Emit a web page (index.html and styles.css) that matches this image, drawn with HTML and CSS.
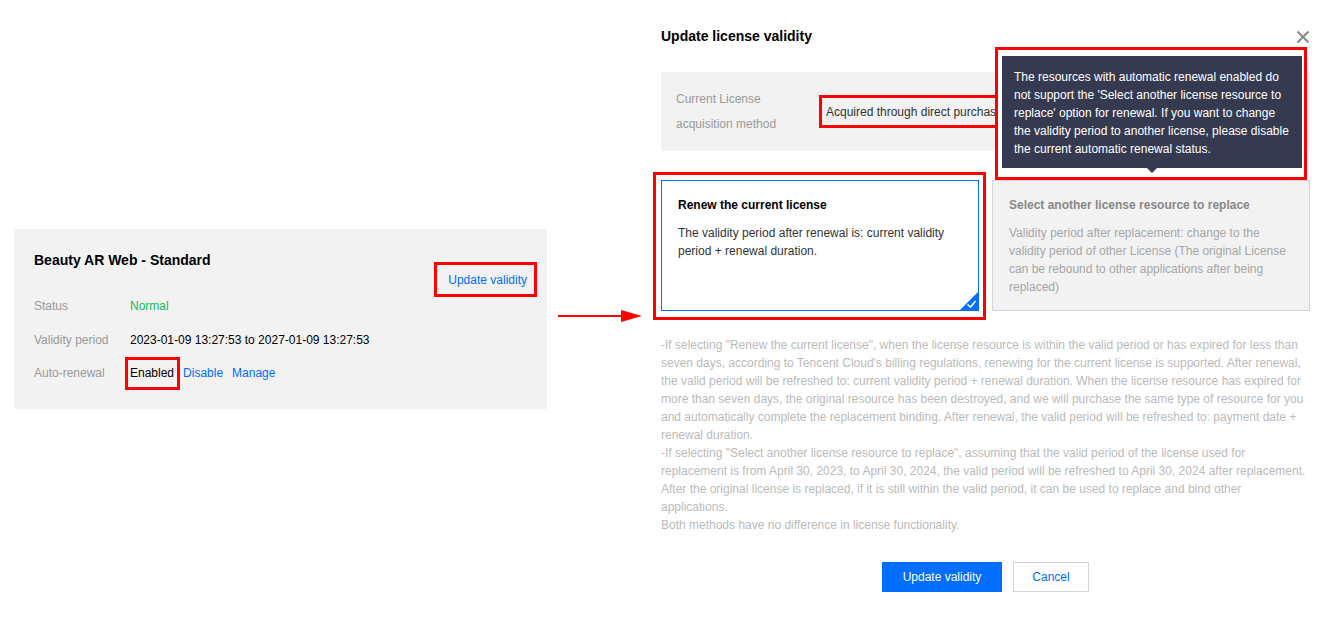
FILE: index.html
```html
<!doctype html>
<html>
<head>
<meta charset="utf-8">
<title>Update license validity</title>
<link rel="stylesheet" href="styles.css">
</head>
<body>
<div class="scene">
	<div class="product">
		<div class="product-head">
			<h3 class="product-name">Beauty AR Web - Standard</h3>
			<a href="#" class="link mark mark-link">Update validity</a>
		</div>
		<ul class="info">
			<li><span class="info-label">Status</span><span class="ok">Normal</span></li>
			<li><span class="info-label">Validity period</span><span>2023-01-09 13:27:53 to 2027-01-09 13:27:53</span></li>
			<li><span class="info-label">Auto-renewal</span><span class="mark mark-tag">Enabled</span><a href="#" class="link">Disable</a><a href="#" class="link">Manage</a></li>
		</ul>
	</div>

	<svg class="arrow" width="84" height="14" viewBox="0 0 84 14">
		<line x1="0" y1="7" x2="66" y2="7" stroke="#f00" stroke-width="2"/>
		<polygon points="63,1 84,7 63,13" fill="#f00"/>
	</svg>

	<div class="dialog">
		<div class="dialog-head">
			<h2 class="dialog-title">Update license validity</h2>
			<svg class="close" width="14" height="14" viewBox="0 0 14 14">
				<path d="M1.5 1.5 L12.5 12.5 M12.5 1.5 L1.5 12.5" stroke="#888" stroke-width="2"/>
			</svg>
		</div>

		<div class="method">
			<span class="method-label">Current License acquisition method</span>
			<span class="mark mark-method">Acquired through direct purchase</span>
		</div>

		<div class="options">
			<div class="option option-on">
				<h4 class="option-title">Renew the current license</h4>
				<p class="option-text">The validity period after renewal is: current validity period + renewal duration.</p>
				<svg class="option-check" width="18" height="18" viewBox="0 0 18 18">
					<polygon points="18,0 18,18 0,18" fill="#006eff"/>
					<path d="M7.5 12.5 L10.5 15 L15.5 9" stroke="#fff" stroke-width="1.6" fill="none"/>
				</svg>
			</div>
			<div class="option option-off">
				<h4 class="option-title">Select another license resource to replace</h4>
				<p class="option-text">Validity period after replacement: change to the validity period of other License (The original License can be rebound to other applications after being replaced)</p>
			</div>
		</div>

		<p class="notes">-If selecting "Renew the current license", when the license resource is within the valid period or has expired for less than seven days, according to Tencent Cloud's billing regulations, renewing for the current license is supported. After renewal, the valid period will be refreshed to: current validity period + renewal duration. When the license resource has expired for more than seven days, the original resource has been destroyed, and we will purchase the same type of resource for you and automatically complete the replacement binding. After renewal, the valid period will be refreshed to: payment date + renewal duration.<br>-If selecting "Select another license resource to replace", assuming that the valid period of the license used for replacement is from April 30, 2023, to April 30, 2024, the valid period will be refreshed to April 30, 2024 after replacement. After the original license is replaced, if it is still within the valid period, it can be used to replace and bind other applications.<br>Both methods have no difference in license functionality.</p>

		<div class="actions">
			<button class="btn btn-primary">Update validity</button>
			<button class="btn btn-weak">Cancel</button>
		</div>

		<div class="tip-mark">
			<div class="tip">The resources with automatic renewal enabled do not support the 'Select another license resource to replace' option for renewal. If you want to change the validity period to another license, please disable the current automatic renewal status.</div>
		</div>
	</div>
</div>
</body>
</html>
```

FILE: styles.css
```css
body,h1,h2,h3,h4,p,ul,li{margin:0;padding:0;}
body{ background:#fff; font:12px/18px "Liberation Sans", Arial, sans-serif; color:#000;}
li{ list-style:none;}
a{ text-decoration:none;}
button{ font-family:inherit;}

.scene{ display:flex; align-items:flex-start; width:1336px; height:617px; overflow:hidden;}

/* left card */
.product{ width:533px; height:180px; margin:229px 0 0 14px; padding:21px 20px 0; box-sizing:border-box; background:#f2f2f2;}
.product-head{ display:flex; justify-content:space-between; align-items:flex-start;}
.product-name{ font-size:14px; line-height:20px; font-weight:bold;}
.product-head .link{ margin-top:20px;}
.info{ display:flex; flex-direction:column; gap:13.5px; margin-top:6px;}
.info li{ display:flex; line-height:20px;}
.info-label{ width:96px; color:#999;}
.ok{ color:#0abf5b;}
.link{ color:#006eff;}
.info .link{ margin-left:9px;}

.mark{ position:relative; display:inline-block; line-height:20px;}
.mark:after{ content:''; position:absolute; border:3px solid #f00;}
.mark-link:after{ top:-8px; left:-14px; right:-10px; bottom:-7px;}
.mark-tag:after{ top:-6px; left:-5px; right:-6px; bottom:-7px;}
.mark-method:after{ top:-7px; left:-7px; right:-6px; bottom:-6px;}

.arrow{ display:block; margin:309px 0 0 11px; flex:none;}

/* dialog */
.dialog{ position:relative; width:649px; margin-left:19px; padding-top:26px; flex:none;}
.dialog-head{ display:flex; justify-content:space-between; align-items:center;}
.dialog-title{ font-size:14px; line-height:20px; font-weight:bold;}
.close{ display:block; margin-top:2px;}

.method{ display:flex; align-items:center; height:79px; margin-top:26px; padding:0 15px; box-sizing:border-box; background:#f2f2f2;}
.method-label{ width:150px; line-height:25px; color:#999; padding-right:20px; box-sizing:border-box;}
.method .mark{ color:#333;}

.options{ display:flex; gap:13px; margin-top:29px;}
.option{ position:relative; width:318px; height:131px; padding:15px 15px 15px 16px; box-sizing:border-box; border:1px solid #cfd5de;}
.option-title{ font-size:12px; line-height:18px; font-weight:bold;}
.option-text{ margin-top:10px;}
.option-on{ border-color:#006eff; background:#fff;}
.option-on .option-text{ color:#333;}
.option-on:after{ content:''; position:absolute; top:-9px; left:-9px; right:-8px; bottom:-10px; border:3px solid #f00;}
.option-check{ position:absolute; right:0; bottom:0; display:block;}
.option-off{ background:#f2f2f2;}
.option-off .option-title{ color:#888;}
.option-off .option-text{ color:#a6a6a6;}

.notes{ margin-top:25px; color:#bbb;}

.actions{ display:flex; justify-content:center; gap:11px; margin-top:28px;}
.btn{ height:30px; font-size:12px; border:1px solid #cfd5de; background:#fff; color:#006eff; cursor:pointer;}
.btn-primary{ width:120px; border-color:#006eff; background:#006eff; color:#fff;}
.btn-weak{ width:76px;}

/* tooltip over the right option */
.tip-mark{ position:absolute; left:334px; top:47px; width:312px; height:133px; padding:6px 2px 0 4px; box-sizing:border-box; border:3px solid #f00; background:#fff;}
.tip{ position:relative; width:300px; padding:12px 12px 10px; box-sizing:border-box; background:#363a50; color:#fff; line-height:18px;}
.tip:after{ content:''; position:absolute; left:145px; bottom:-5px; border:5px solid transparent; border-bottom:0; border-top-color:#363a50;}
```
